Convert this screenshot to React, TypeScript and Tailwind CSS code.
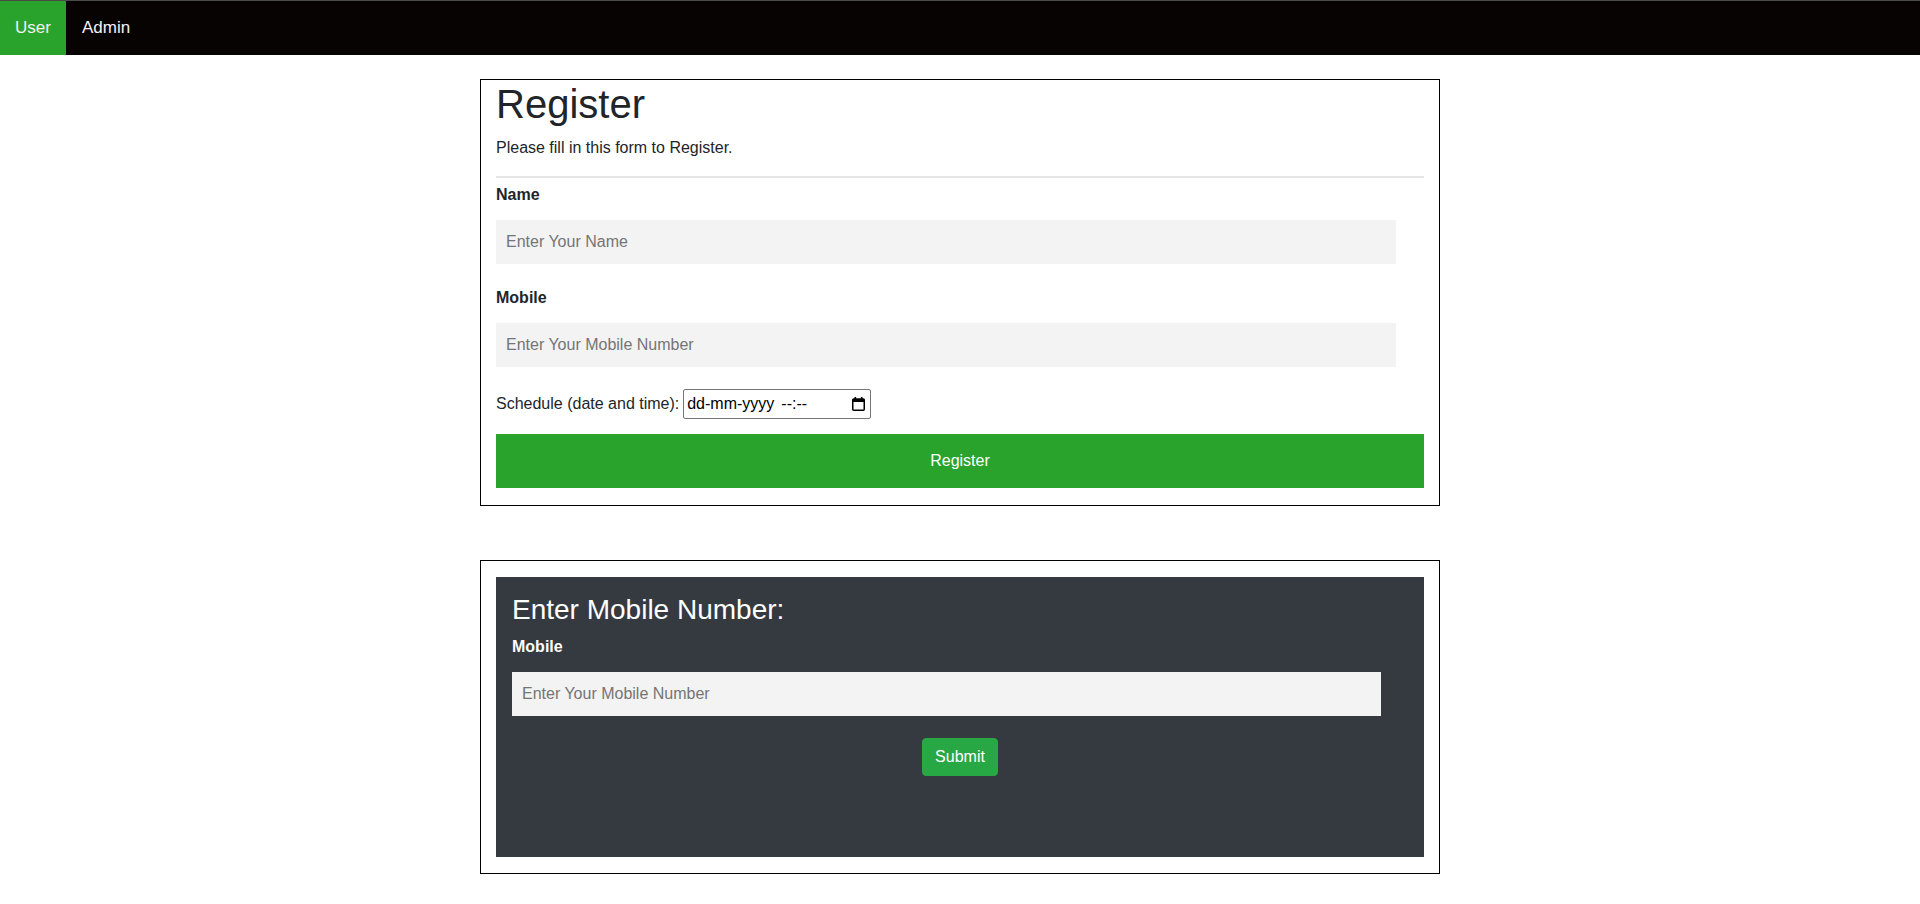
import React from 'react';

const CalendarIcon: React.FC = () => (
  <svg width="13" height="14" viewBox="0 0 13 14" fill="none">
    <rect x="2.5" y="0" width="1.6" height="2.5" fill="#000" />
    <rect x="8.9" y="0" width="1.6" height="2.5" fill="#000" />
    <rect x="0.75" y="2" width="11.5" height="11.25" rx="1" stroke="#000" strokeWidth="1.5" />
    <rect x="0.75" y="2" width="11.5" height="3" fill="#000" />
  </svg>
);

const App: React.FC = () => {
  return (
    <div className="min-h-screen bg-white font-['Liberation_Sans',Arial,sans-serif] text-[#212529]">
      <nav className="flex border-t border-[#4a4a4a] bg-[#080303]">
        <a href="#" className="flex h-[54px] w-[66px] items-center justify-center bg-[#2aa32c] text-[17px] text-[#f2f2f2]">
          User
        </a>
        <a href="#" className="flex h-[54px] items-center px-4 text-[17px] text-[#f2f2f2]">
          Admin
        </a>
      </nav>

      {/* register form */}
      <div className="mx-auto mt-[24px] w-[960px] border border-black px-[15px] pb-[17px]">
        <h1 className="mb-2 text-[40px] leading-[48px]">Register</h1>
        <p className="mb-4 text-[16px] leading-6">Please fill in this form to Register.</p>
        <div className="mb-[5px] h-[2px] bg-[#e6e6e6]"></div>

        <label className="block text-[16px] font-bold leading-6">Name</label>
        <input
          type="text"
          placeholder="Enter Your Name"
          className="mt-[13px] mb-[22px] block h-[44px] w-[97%] bg-[#f3f3f3] px-[10px] text-[16px] outline-none placeholder:text-[#757575]"
        />

        <label className="block text-[16px] font-bold leading-6">Mobile</label>
        <input
          type="text"
          placeholder="Enter Your Mobile Number"
          className="mt-[13px] mb-[22px] block h-[44px] w-[97%] bg-[#f3f3f3] px-[10px] text-[16px] outline-none placeholder:text-[#757575]"
        />

        <div className="flex h-[30px] items-center text-[16px] leading-6">
          <span>Schedule (date and time):</span>
          <div className="ml-[4px] flex h-[30px] w-[188px] items-center justify-between rounded-[2px] border border-[#767676] pl-[3px] pr-[5px] text-black">
            <span>
              dd-mm-yyyy<span className="ml-[7px]">--:--</span>
            </span>
            <CalendarIcon />
          </div>
        </div>

        <button className="mt-[15px] h-[54px] w-full bg-[#2aa32c] text-[16px] text-white">Register</button>
      </div>

      {/* mobile lookup */}
      <div className="mx-auto mt-[54px] w-[960px] border border-black px-[15px] py-4">
        <div className="h-[280px] bg-[#343a40] px-4 pt-4">
          <h3 className="mb-2 text-[28px] font-normal leading-[33.6px] text-white">Enter Mobile Number:</h3>
          <label className="block text-[16px] font-bold leading-6 text-white">Mobile</label>
          <input
            type="text"
            placeholder="Enter Your Mobile Number"
            className="mt-[13px] mb-[22px] block h-[44px] w-[97%] bg-[#f3f3f3] px-[10px] text-[16px] outline-none placeholder:text-[#757575]"
          />
          <div className="flex justify-center">
            <button className="rounded-[4px] border border-[#28a745] bg-[#28a745] px-3 py-1.5 text-[16px] leading-6 text-white">
              Submit
            </button>
          </div>
        </div>
      </div>
    </div>
  );
};

export default App;
